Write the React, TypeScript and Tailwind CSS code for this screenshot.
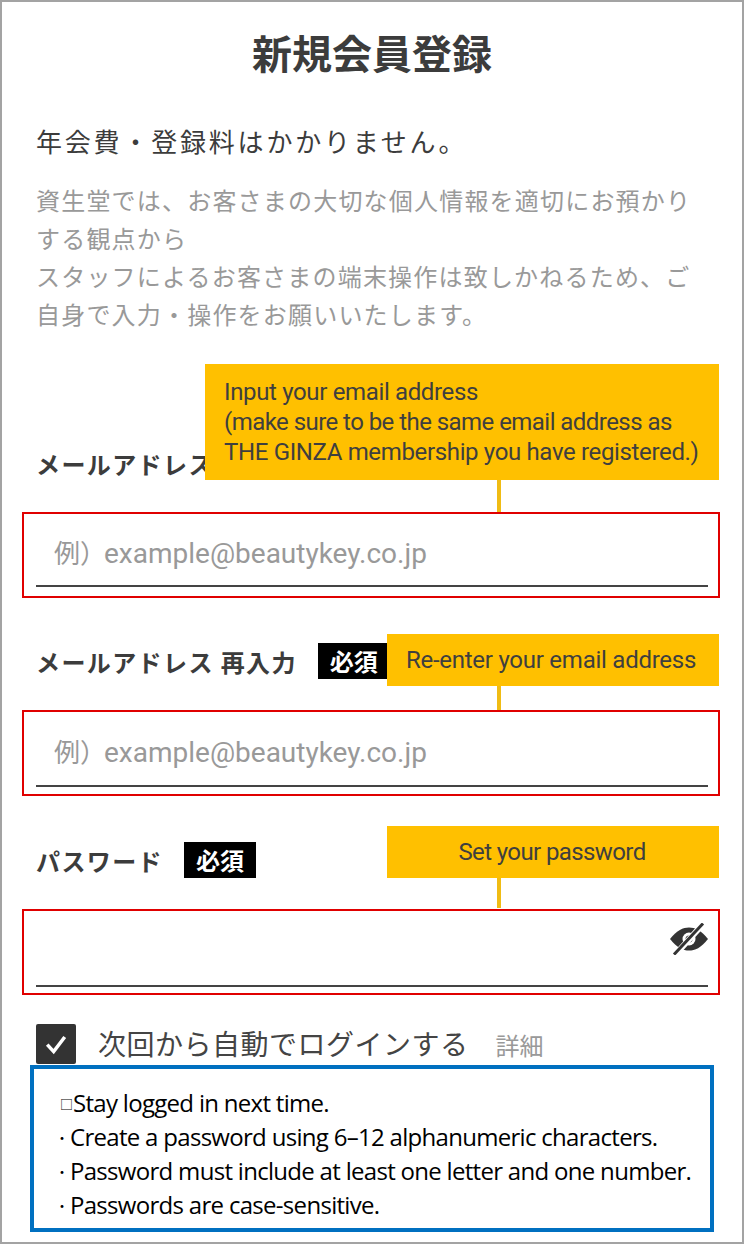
const jp = "font-['Noto_Sans_CJK_JP','Noto_Sans',sans-serif]";

function Badge() {
  return (
    <span className="flex h-[36px] w-[72px] shrink-0 items-center justify-center bg-black text-[24px] leading-none font-bold text-white">
      必須
    </span>
  );
}

function EyeOff() {
  return (
    <svg viewBox="0 0 38 32" className="h-[32px] w-[38px]">
      <path d="M0 16 C7 7 13 4.5 19 4.5 C25 4.5 31 7 38 16 C31 25 25 27.5 19 27.5 C13 27.5 7 25 0 16 Z" fill="#333" />
      <circle cx="19" cy="16" r="6.5" fill="#fff" />
      <circle cx="19" cy="16" r="3.5" fill="#333" />
      <path d="M4 33 L34 0" stroke="#fff" strokeWidth="6" />
      <path d="M4 31.5 L33 0.5" stroke="#333" strokeWidth="3" />
    </svg>
  );
}

function Callout({ className, children }: { className: string; children: React.ReactNode }) {
  return (
    <div className={`absolute bg-[#ffc000] font-['Roboto',sans-serif] text-[24px] leading-[30px] text-[#3f3f3f] ${className}`}>
      {children}
    </div>
  );
}

function Field({ label, top, pb, placeholder, icon, badge = true, children }: { label: string; top: string; pb: string; placeholder?: string; icon?: boolean; badge?: boolean; children: React.ReactNode }) {
  return (
    <section className={`relative mx-[20px] w-[698px] ${top}`}>
      <div className="flex h-[36px] items-center gap-[21px] pl-[14px]">
        <span className="mt-[2px] text-[24px] leading-none font-bold tracking-[1.4px] whitespace-pre text-[#3c3c3c]">{label}</span>
        {badge && <Badge />}
      </div>
      {children}
      <div className={`mt-[31px] flex h-[86px] flex-col border-2 border-[#e00000] pr-[10px] pl-[12px] ${pb}`}>
        <div className="relative flex flex-1 items-center border-b-2 border-[#444] pl-[18px]">
          {placeholder && (
            <span className="mt-[8px] font-['Roboto','Noto_Sans_CJK_JP',sans-serif] text-[28px] leading-none text-[#999]">
              <span className={`${jp} mr-[-2px] text-[26px]`}>例）</span>
              {placeholder}
            </span>
          )}
          {icon && (
            <span className="absolute top-[12px] right-0">
              <EyeOff />
            </span>
          )}
        </div>
      </div>
    </section>
  );
}

function Dot() {
  return <span className="mr-[1px] ml-[-5px] font-['Noto_Sans_CJK_JP',sans-serif] text-[14px] leading-none tracking-normal">・</span>;
}

export default function App() {
  return (
    <div className={`h-[1244px] w-[744px] overflow-hidden border-2 border-[#a3a3a3] bg-white ${jp}`}>
      <h1 className="mt-[28px] text-center text-[40px] leading-[44px] font-bold text-[#3c3c3c]">新規会員登録</h1>

      <p className="mt-[47px] px-[34px] text-[26px] leading-[40px] tracking-[2.8px] text-[#3c3c3c]">年会費・登録料はかかりません。</p>
      <p className="mt-[20px] px-[34px] text-[24px] leading-[38px] tracking-[1.2px] text-[#999]">
        資生堂では、お客さまの大切な個人情報を適切にお預かり
        <br />
        する観点から
        <br />
        スタッフによるお客さまの端末操作は致しかねるため、ご
        <br />
        自身で入力・操作をお願いいたします。
      </p>

      <Field label="メールアドレス" top="mt-[112px]" pb="pb-[9px]" placeholder="example@beautykey.co.jp" badge={false}>
        <Callout className="top-[-81px] left-[183px] h-[116px] w-[514px] pt-[13px] pl-[19px] tracking-[-0.35px]">
          Input your email address
          <br />
          <span className="tracking-[-0.55px]">(make sure to be the same email address as</span>
          <br />
          THE GINZA membership you have registered.)
          <span className="absolute top-full left-[292px] h-[32px] w-[4px] bg-[#f0bc14]" />
        </Callout>
      </Field>

      <Field label="メールアドレス 再入力" top="mt-[45px]" pb="pb-[7px]" placeholder="example@beautykey.co.jp">
        <Callout className="top-[-9px] left-[365px] flex h-[52px] w-[332px] items-center justify-center pr-[4px] tracking-[-0.25px]">
          Re-enter your email address
          <span className="absolute top-full left-[110px] h-[24px] w-[4px] bg-[#f0bc14]" />
        </Callout>
      </Field>

      <Field label="パスワード" top="mt-[46px]" pb="pb-[6px]" icon>
        <Callout className="top-[-16px] left-[365px] flex h-[52px] w-[332px] items-center justify-center pr-[2px] tracking-[-0.6px]">
          Set your password
          <span className="absolute top-full left-[110px] h-[30px] w-[4px] bg-[#f0bc14]" />
        </Callout>
      </Field>

      <div className="mt-[29px] flex h-[40px] items-center pl-[34px]">
        <span className="flex h-[40px] w-[40px] items-center justify-center rounded-[2px] bg-[#333]">
          <svg viewBox="0 0 24 24" className="h-[28px] w-[28px]" fill="none" stroke="#fff" strokeWidth="3">
            <path d="M4.5 12.5 L10 18.5 L19.5 6" />
          </svg>
        </span>
        <span className="mt-[-2px] ml-[22px] text-[28px] leading-none tracking-[0.5px] text-[#444]">次回から自動でログインする</span>
        <span className="mt-[2px] ml-[27px] text-[24px] leading-none text-[#999]">詳細</span>
      </div>

      <div className="mt-[1px] ml-[28px] h-[167px] w-[684px] border-4 border-[#0070c0] pt-[17px] pl-[26px] font-['Open_Sans','Noto_Sans_CJK_JP',sans-serif] text-[24px] tracking-[-0.7px] whitespace-nowrap text-black">
        <div className="flex h-[34px] items-center">
          <span className="font-['Noto_Sans_CJK_JP',sans-serif] text-[13px] leading-none tracking-normal">□</span>Stay logged in next time.
        </div>
        <div className="flex h-[34px] items-center">
          <Dot />Create a password using 6–12 alphanumeric characters.
        </div>
        <div className="flex h-[34px] items-center">
          <Dot />Password must include at least one letter and one number.
        </div>
        <div className="flex h-[34px] items-center">
          <Dot />Passwords are case-sensitive.
        </div>
      </div>
    </div>
  );
}
